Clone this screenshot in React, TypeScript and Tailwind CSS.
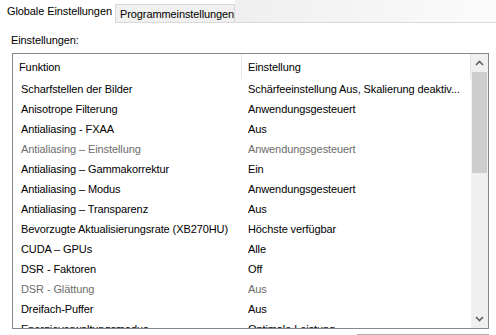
import React from "react";

type Row = { f: string; v: string; dis?: boolean };

const rows: Row[] = [
  { f: "Scharfstellen der Bilder", v: "Schärfeeinstellung Aus, Skalierung deaktiv..." },
  { f: "Anisotrope Filterung", v: "Anwendungsgesteuert" },
  { f: "Antialiasing - FXAA", v: "Aus" },
  { f: "Antialiasing – Einstellung", v: "Anwendungsgesteuert", dis: true },
  { f: "Antialiasing – Gammakorrektur", v: "Ein" },
  { f: "Antialiasing – Modus", v: "Anwendungsgesteuert" },
  { f: "Antialiasing – Transparenz", v: "Aus" },
  { f: "Bevorzugte Aktualisierungsrate (XB270HU)", v: "Höchste verfügbar" },
  { f: "CUDA – GPUs", v: "Alle" },
  { f: "DSR - Faktoren", v: "Off" },
  { f: "DSR - Glättung", v: "Aus", dis: true },
  { f: "Dreifach-Puffer", v: "Aus" },
  { f: "Energieverwaltungsmodus", v: "Optimale Leistung" },
];

export default function App() {
  return (
    <div
      className="w-[496px] h-[335px] bg-white overflow-hidden text-[11px] leading-[14px] text-black tracking-[-0.1px]"
      style={{ fontFamily: '"Liberation Sans", Arial, sans-serif' }}
    >
      {/* Tab strip */}
      <div className="flex h-[23px]">
        <div className="w-[115px] h-[23px] bg-white flex items-center pl-[7px] pb-[1px] whitespace-nowrap">
          Globale Einstellungen
        </div>
        <div className="w-[120px] flex flex-col">
          <div className="h-[4px] bg-white" />
          <div className="flex-1 bg-[#f0f0f0] border border-[#d9d9d9] flex items-center pl-[4px] pt-[1px] whitespace-nowrap">
            Programmeinstellungen
          </div>
        </div>
        <div className="flex-1 bg-gradient-to-r from-[#efefef] to-[#fbfbfb] border-b border-[#d9d9d9]" />
      </div>

      {/* Label */}
      <div className="pl-[11px] h-[30px] flex items-center pt-[4px]">Einstellungen:</div>

      {/* List box */}
      <div className="ml-[12px] w-[477px] h-[276px] border border-[#828790] flex overflow-hidden">
        <div className="flex-1 flex flex-col overflow-hidden">
          <div className="h-[25px] flex shrink-0">
            <div className="w-[229px] flex items-center pl-[6px] border-r border-[#e5e5e5]">Funktion</div>
            <div className="flex-1 flex items-center pl-[6px]">Einstellung</div>
            <div className="w-[1px] bg-[#e5e5e5]" />
          </div>
          {rows.map((r, i) => (
            <div
              key={i}
              className={`h-[20px] flex shrink-0 items-center ${r.dis ? "text-[#6d6d6d]" : "text-black"}`}
            >
              <div className="w-[229px] pl-[8px] whitespace-nowrap overflow-hidden">{r.f}</div>
              <div className="flex-1 pl-[6px] whitespace-nowrap overflow-hidden">{r.v}</div>
            </div>
          ))}
        </div>
        {/* Scrollbar */}
        <div className="w-[17px] bg-[#f0f0f0] flex flex-col">
          <div className="h-[18px] flex items-center justify-center">
            <svg width="9" height="6" viewBox="0 0 9 6">
              <path d="M1 5 L4.5 1.5 L8 5" fill="none" stroke="#606060" strokeWidth="1.6" />
            </svg>
          </div>
          <div className="h-[101px] mx-[1px] bg-[#cdcdcd]" />
          <div className="flex-1" />
          <div className="h-[18px] flex items-center justify-center">
            <svg width="9" height="6" viewBox="0 0 9 6">
              <path d="M1 1 L4.5 4.5 L8 1" fill="none" stroke="#606060" strokeWidth="1.6" />
            </svg>
          </div>
        </div>
      </div>

      {/* Bottom button edge */}
      <div className="flex justify-end pr-[7px] pt-[5px]">
        <div className="w-[132px] h-[10px] border-t border-[#adadad] bg-[#e1e1e1]" />
      </div>
    </div>
  );
}
